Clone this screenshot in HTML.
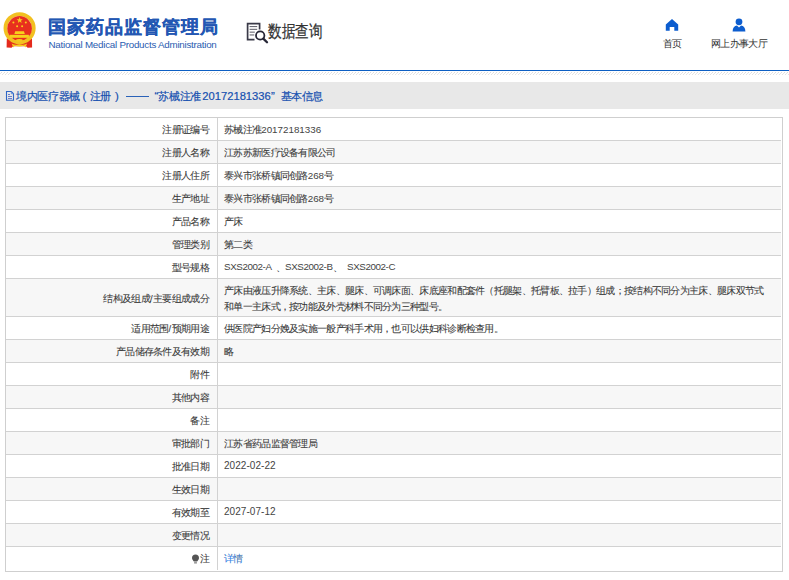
<!DOCTYPE html>
<html><head><meta charset="utf-8">
<style>
*{margin:0;padding:0;box-sizing:border-box}
html,body{text-spacing-trim:space-all;width:789px;height:580px;overflow:hidden;background:#fff;font-family:"Liberation Sans",sans-serif;color:#333}
.abs{position:absolute;white-space:nowrap}
#title{left:48px;top:15px;font-size:17.8px;font-weight:900;color:#2357b3;letter-spacing:0.95px;line-height:24px;-webkit-text-stroke:0.25px #2357b3}
#en{left:48.5px;top:38.5px;font-size:9.8px;color:#2a5cb0;line-height:12px;letter-spacing:-0.25px}
#sjcx{left:268px;top:21px;font-size:17px;color:#333;font-weight:400;-webkit-text-stroke:0.25px #333;line-height:22px;transform:scaleX(0.8);transform-origin:0 0}
.nav{font-size:10px;color:#333;line-height:12px;letter-spacing:-0.7px}
#bline{left:0;top:70px;width:789px;height:1px;background:#0d5fc3}
#hatch{left:0;top:71px;width:789px;height:4px;background:repeating-linear-gradient(135deg,#fff 0,#fff 1.5px,#f0f0f0 1.5px,#f0f0f0 2.2px,#fff 2.2px,#fff 3px)}
#bar{left:0;top:82px;width:789px;height:27px;background:#e8e8e8}
.bt{top:89px;font-size:11.4px;color:#1650b0;letter-spacing:-0.35px;line-height:14px;font-weight:400;-webkit-text-stroke:0.2px #1650b0}
.bt.bd{letter-spacing:0;font-size:11.2px;font-weight:400}
.bt.bp{letter-spacing:0;font-weight:400}
#tbl{left:5px;top:117px;width:778px;height:455px;border:1px solid #cfcfcf}
.row{position:absolute;left:0;width:775px;border-bottom:1px solid #d2d2d2}
.row.g{background:#f7f7f7}
.lab{position:absolute;right:572px;font-size:9.6px;letter-spacing:-0.7px;margin-top:1px;font-weight:400;color:#3a3a3a;white-space:nowrap;-webkit-text-stroke:0.08px #3a3a3a}
.val{position:absolute;left:218px;font-size:9.6px;letter-spacing:-0.7px;margin-top:1px;font-weight:400;color:#3a3a3a;white-space:nowrap;-webkit-text-stroke:0.08px #3a3a3a}
.d{letter-spacing:0;font-size:9.8px;font-weight:400;-webkit-text-stroke:0;color:#444}
.dt{position:relative;top:-1px;font-size:10px;letter-spacing:0.05px}
.sl{letter-spacing:0.6px;font-weight:400}
.sx{position:absolute;top:-1px;letter-spacing:-0.4px}
.sx2{position:absolute;top:0}
#vdiv{left:217px;top:118px;width:1px;height:452px;background:#d2d2d2}
</style></head><body>
<!-- emblem -->
<svg class="abs" style="left:0;top:0" width="40" height="52" viewBox="0 0 40 52">
  <path d="M6.8 38.5 L6.6 47.6 L11.5 47.8 L13.2 46.2 L26 46.2 L27.7 47.8 L32.1 47.6 L32 38.5 Z" fill="#e42a1c"/>
  <circle cx="19.6" cy="28.2" r="14.1" fill="none" stroke="#f2c020" stroke-width="3.9"/>
  <circle cx="19.6" cy="28.4" r="12.3" fill="#e8301e"/>
  <polygon points="19.7,17.1 20.5,19.3 22.8,19.3 21,20.7 21.6,22.9 19.7,21.6 17.8,22.9 18.4,20.7 16.6,19.3 18.9,19.3" fill="#f7d11c"/>
  <circle cx="13.4" cy="22.4" r="1" fill="#f7d11c"/>
  <circle cx="25.8" cy="22.4" r="1" fill="#f7d11c"/>
  <circle cx="17.1" cy="26.2" r="1" fill="#f7d11c"/>
  <circle cx="22.1" cy="26.2" r="1" fill="#f7d11c"/>
  <path d="M15.2 31.2 H24 L24.8 33.9 H14.4 Z" fill="#f7d11c"/>
  <rect x="9.8" y="34.8" width="19.1" height="3" fill="#f7d11c"/>
  <ellipse cx="19.4" cy="40.4" rx="3.4" ry="1.4" fill="#f5c81e"/>
  <path d="M11.6 43.5 Q15 45.5 19.4 44.3 Q23.8 45.5 27.1 43.5 L25.5 47.6 L24 45.8 Q19.4 47.2 14.8 45.8 L13.3 47.6 Z" fill="#f5d01c"/>
</svg>
<div id="title" class="abs">国家药品监督管理局</div>
<div id="en" class="abs">National Medical Products Administration</div>
<!-- data query icon -->
<svg class="abs" style="left:246px;top:22px" width="23" height="22" viewBox="0 0 23 22">
  <path d="M8.5 17.6 H1.6 V1.6 H13.6 V7.5" fill="none" stroke="#3a3a48" stroke-width="1.7"/>
  <rect x="3.6" y="4" width="7.6" height="1.1" fill="#6a6a74"/>
  <rect x="3.6" y="6.8" width="7.6" height="1.1" fill="#6a6a74"/>
  <rect x="3.6" y="9.6" width="5.2" height="1.1" fill="#6a6a74"/>
  <rect x="3.6" y="12.4" width="4.6" height="1.1" fill="#6a6a74"/>
  <circle cx="14.2" cy="13.5" r="4.2" fill="none" stroke="#262636" stroke-width="1.8"/>
  <path d="M17.3 16.6 L21 20.3" stroke="#262636" stroke-width="2.3" stroke-linecap="round"/>
</svg>
<div id="sjcx" class="abs">数据查询</div>
<!-- home icon -->
<svg class="abs" style="left:665px;top:18px" width="14" height="14" viewBox="0 0 14 14">
  <path d="M0.8 6.5 L7 1 L13.2 6.5 V12.7 H9.3 V9 H4.7 V12.7 H0.8 Z" fill="#0c5dcf"/>
</svg>
<div class="abs nav" style="left:662.5px;top:37.6px">首页</div>
<!-- user icon -->
<svg class="abs" style="left:732px;top:18px" width="14" height="14" viewBox="0 0 14 14">
  <circle cx="7" cy="3.8" r="3.4" fill="#0c5dcf"/>
  <path d="M0.6 13.5 Q0.8 8 5 7.5 L7 9.5 L9 7.5 Q13.2 8 13.4 13.5 Z" fill="#0c5dcf"/>
</svg>
<div class="abs nav" style="left:711px;top:37.6px">网上办事大厅</div>

<div id="bline" class="abs"></div>
<svg class="abs" style="left:0;top:71px" width="789" height="4"><defs><pattern id="hp" width="3" height="3" patternUnits="userSpaceOnUse"><rect x="2" y="0" width="1" height="1" fill="#e3e3e3"/><rect x="1" y="1" width="1" height="1" fill="#dcdcdc"/><rect x="0" y="2" width="1" height="1" fill="#e6e6e6"/></pattern></defs><rect x="0" y="1" width="789" height="3" fill="url(#hp)"/></svg>
<div id="bar" class="abs"></div>
<svg class="abs" style="left:5px;top:90px" width="10" height="12" viewBox="0 0 10 12">
  <path d="M1.5 1.5 H6.3 L8.5 3.7 V10.3 H1.5 Z" fill="none" stroke="#2f66c6" stroke-width="1.1"/>
  <path d="M6.3 1.5 V3.7 H8.5" fill="none" stroke="#5a8ad6" stroke-width="0.9"/>
  <path d="M3 4.5 H5 M3 6.5 H7 M3 8.5 H7" stroke="#5a72c8" stroke-width="0.9"/>
</svg>
<div class="abs bt" style="left:16.2px">境内医疗器械</div>
<div class="abs bt bp" style="left:82.5px">(</div>
<div class="abs bt" style="left:89.7px">注册</div>
<div class="abs bt bp" style="left:115px">)</div>
<div class="abs" style="left:125.5px;top:96px;width:23px;height:1px;background:#2a62b8"></div>
<div class="abs bt bp" style="left:154.5px">&#8220;</div>
<div class="abs bt" style="left:158.4px">苏械注准</div>
<div class="abs bt bd" style="left:202.3px">20172181336</div>
<div class="abs bt bp" style="left:271px">&#8221;</div>
<div class="abs bt" style="left:280.5px">基本信息</div>

<div id="tbl" class="abs">
<div class="row" style="top:0px;height:23px;"><div class="lab" style="top:0;line-height:22px">注册证编号</div><div class="val" style="top:0;line-height:22px">苏械注准<span class="d">20172181336</span></div></div>
<div class="row g" style="top:23px;height:23px;"><div class="lab" style="top:0;line-height:22px">注册人名称</div><div class="val" style="top:0;line-height:22px">江苏苏新医疗设备有限公司</div></div>
<div class="row" style="top:46px;height:23px;"><div class="lab" style="top:0;line-height:22px">注册人住所</div><div class="val" style="top:0;line-height:22px">泰兴市张桥镇同创路<span class="d">268</span>号</div></div>
<div class="row g" style="top:69px;height:23px;"><div class="lab" style="top:0;line-height:22px">生产地址</div><div class="val" style="top:0;line-height:22px">泰兴市张桥镇同创路<span class="d">268</span>号</div></div>
<div class="row" style="top:92px;height:23px;"><div class="lab" style="top:0;line-height:22px">产品名称</div><div class="val" style="top:0;line-height:22px">产床</div></div>
<div class="row g" style="top:115px;height:23px;"><div class="lab" style="top:0;line-height:22px">管理类别</div><div class="val" style="top:0;line-height:22px">第二类</div></div>
<div class="row" style="top:138px;height:23px;"><div class="lab" style="top:0;line-height:22px">型号规格</div><div class="val" style="top:0;line-height:22px"><span class="d sx" style="left:0px">SXS2002-A</span><span class="sx2" style="left:52px">、</span><span class="d sx" style="left:61px">SXS2002-B</span><span class="sx2" style="left:108.5px">、</span><span class="d sx" style="left:123px">SXS2002-C</span></div></div>
<div class="row g" style="top:161px;height:38px;"><div class="lab" style="top:0;line-height:37px">结构及组成<span class="sl">/</span>主要组成成分</div><div class="val" style="top:3px;line-height:15.5px">产床由液压升降系统、主床、腿床、可调床面、床底座和配套件（托腿架、托臂板、拉手）组成；按结构不同分为主床、腿床双节式<br>和单一主床式，按功能及外壳材料不同分为三种型号。</div></div>
<div class="row" style="top:199px;height:23px;"><div class="lab" style="top:0;line-height:22px">适用范围<span class="sl">/</span>预期用途</div><div class="val" style="top:0;line-height:22px">供医院产妇分娩及实施一般产科手术用，也可以供妇科诊断检查用。</div></div>
<div class="row g" style="top:222px;height:23px;"><div class="lab" style="top:0;line-height:22px">产品储存条件及有效期</div><div class="val" style="top:0;line-height:22px">略</div></div>
<div class="row" style="top:245px;height:23px;"><div class="lab" style="top:0;line-height:22px">附件</div><div class="val" style="top:0;line-height:22px"></div></div>
<div class="row g" style="top:268px;height:23px;"><div class="lab" style="top:0;line-height:22px">其他内容</div><div class="val" style="top:0;line-height:22px"></div></div>
<div class="row" style="top:291px;height:23px;"><div class="lab" style="top:0;line-height:22px">备注</div><div class="val" style="top:0;line-height:22px"></div></div>
<div class="row g" style="top:314px;height:23px;"><div class="lab" style="top:0;line-height:22px">审批部门</div><div class="val" style="top:0;line-height:22px">江苏省药品监督管理局</div></div>
<div class="row" style="top:337px;height:23px;"><div class="lab" style="top:0;line-height:22px">批准日期</div><div class="val" style="top:0;line-height:22px"><span class="d dt">2022-02-22</span></div></div>
<div class="row g" style="top:360px;height:23px;"><div class="lab" style="top:0;line-height:22px">生效日期</div><div class="val" style="top:0;line-height:22px"></div></div>
<div class="row" style="top:383px;height:23px;"><div class="lab" style="top:0;line-height:22px">有效期至</div><div class="val" style="top:0;line-height:22px"><span class="d dt">2027-07-12</span></div></div>
<div class="row g" style="top:406px;height:23px;"><div class="lab" style="top:0;line-height:22px">变更情况</div><div class="val" style="top:0;line-height:22px"></div></div>
<div class="row" style="top:429px;height:23px;border-bottom:none;"><div class="lab" style="top:0;line-height:22px"><svg width="7" height="10" viewBox="0.5 0 7 10" style="vertical-align:-2px;margin-right:0.7px"><path d="M4 0.5 C6.2 0.5 7.5 2 7.5 3.9 C7.5 5.6 6 6.5 5.6 7.6 H2.4 C2 6.5 0.5 5.6 0.5 3.9 C0.5 2 1.8 0.5 4 0.5 Z" fill="#555"/><rect x="2.6" y="8" width="2.8" height="1.6" fill="#999"/></svg>注</div><div class="val" style="top:0;line-height:22px"><span style="color:#3288f0">详情</span></div></div>
</div>
<div id="vdiv" class="abs"></div>
</body></html>
